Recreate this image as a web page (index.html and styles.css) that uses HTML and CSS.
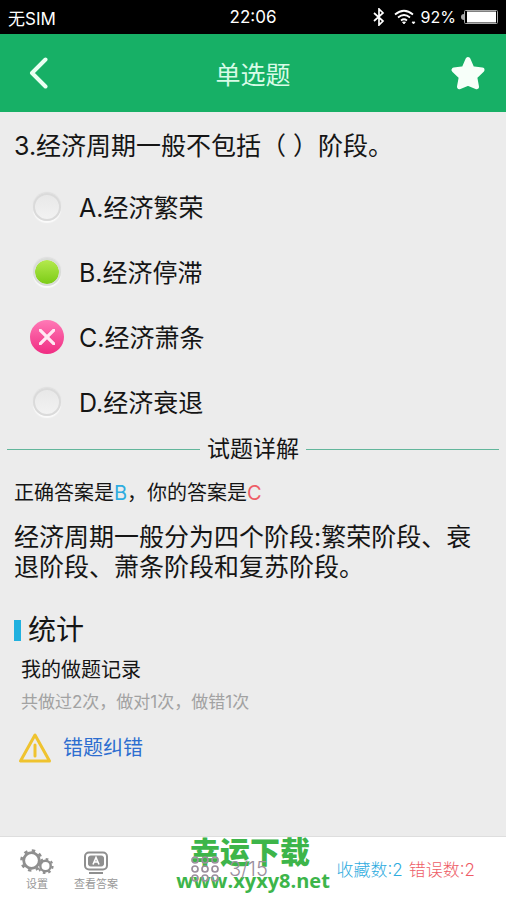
FILE: index.html
```html
<!DOCTYPE html>
<html lang="zh-CN">
<head>
<meta charset="utf-8">
<meta name="viewport" content="width=device-width, initial-scale=1">
<title>单选题</title>
<link rel="stylesheet" href="styles.css">
</head>
<body>
<div class="status">
  <span>无SIM</span>
  <span class="time">22:06</span>
  <span class="indicators">
    <svg class="bluetooth" width="12" height="18" viewBox="0 0 12 18" fill="none" stroke="#fff" stroke-width="1.7"><path d="M1 5l9 8-4 4V1l4 4-9 8"/></svg>
    <svg class="wifi" width="22" height="16" viewBox="0 0 22 16" fill="none" stroke="#fff" stroke-width="1.7"><path d="M1 5.500Q10 -2 19 5.500M4 8.500Q10 3.500 16 8.500M7 11.500Q10 9 13 11.500"/><path d="M8.500 13L10 15l1.500-2zM18 13h3l-1.500 2z" fill="#fff" stroke-width=".8"/></svg>
    <span>92%</span>
    <svg class="battery" width="37" height="14" viewBox="0 0 37 14"><path d="M3 4Q0 4 0 7t3 3z" fill="#aaa"/><rect x="3.500" y=".5" width="33" height="13" rx="1" fill="none" stroke="#aaa"/><rect x="6" y="1.500" width="29" height="11" fill="#fff"/></svg>
  </span>
</div>
<header class="header">
  <button class="icon-button" aria-label="返回"><svg width="20" height="32" viewBox="0 0 20 32" fill="none" stroke="#e9fff2" stroke-width="4" stroke-linecap="round" stroke-linejoin="round"><path d="M17.500 2.500L4 16l13.500 13.500"/></svg></button>
  <h1>单选题</h1>
  <button class="icon-button star" aria-label="收藏"><svg width="36" height="36" viewBox="0 0 36 36" fill="#f7fff9" stroke="#f7fff9" stroke-width="5" stroke-linejoin="round"><path d="M18 4.500l4 9.200 10 1.300-7.300 7 1.800 9.700L18 28.200l-8.500 3.500 1.800-9.700-7.300-7 10-1.300z"/></svg></button>
</header>
<main class="content">
  <form>
    <fieldset class="question">
      <legend>3.经济周期一般不包括（ ）阶段。</legend>
      <label class="option"><input type="radio" name="answer-a"><span>A.经济繁荣</span></label>
      <label class="option"><input type="radio" name="correct" class="correct" checked><span>B.经济停滞</span></label>
      <label class="option"><input type="radio" name="chosen" class="wrong" checked><span>C.经济萧条</span></label>
      <label class="option"><input type="radio" name="answer-d"><span>D.经济衰退</span></label>
    </fieldset>
  </form>
  <h2 class="divider">试题详解</h2>
  <p class="result">正确答案是<span class="blue">B</span>，你的答案是<span class="red">C</span></p>
  <p class="explanation">经济周期一般分为四个阶段:繁荣阶段、衰退阶段、萧条阶段和复苏阶段。</p>
  <section class="stats">
    <h2>统计</h2>
    <h3>我的做题记录</h3>
    <p>共做过2次，做对1次，做错1次</p>
    <a href="#report"><svg width="34" height="32" viewBox="0 0 34 32" fill="none" stroke="#efc32f" stroke-width="3" stroke-linejoin="round"><path d="M17 3L2.500 29h29z"/><path d="M17 13v11" stroke-linecap="round"/></svg>错题纠错</a>
  </section>
</main>
<footer class="footer">
  <button class="tool settings">
    <svg width="34" height="26" viewBox="0 0 34 26" fill="none" stroke="#8f8f8f"><circle cx="11.500" cy="11.500" r="7.800" stroke-width="2.800"/><circle cx="11.500" cy="11.500" r="10" stroke-width="2.600" stroke-dasharray="3.400 4.454"/><circle cx="25.500" cy="17" r="5.200" stroke-width="2.400"/><circle cx="25.500" cy="17" r="7" stroke-width="2.200" stroke-dasharray="2.600 2.898"/></svg>
    <span>设置</span>
  </button>
  <button class="tool answers">
    <svg width="24" height="24" viewBox="0 0 24 24" fill="none" stroke="#8f8f8f"><rect x="1" y="1.500" width="22" height="17" rx="4" stroke-width="2"/><rect x="4.500" y="5" width="15" height="10" rx="2" fill="#8f8f8f"/><path d="M9 13.500l3-7 3 7M10 11h4" stroke="#fff" stroke-width="1.600"/><path d="M5 22h14" stroke-width="2"/></svg>
    <span>查看答案</span>
  </button>
  <button class="pager">
    <svg width="28" height="28" viewBox="0 0 28 28" fill="none" stroke="#9b8f9d" stroke-width="1.700"><circle cx="4" cy="5" r="3"/><circle cx="14" cy="5" r="3"/><circle cx="24" cy="5" r="3"/><circle cx="4" cy="14" r="3"/><circle cx="14" cy="14" r="3"/><circle cx="24" cy="14" r="3"/><circle cx="4" cy="23" r="3"/><circle cx="14" cy="23" r="3"/><circle cx="24" cy="23" r="3"/></svg>
    <span>3/15</span>
  </button>
  <div class="counts"><span class="blue">收藏数:2</span><span class="red">错误数:2</span></div>
  <div class="watermark"><strong>幸运下载</strong><span>www.xyxy8.net</span></div>
</footer>
</body>
</html>
```
FILE: styles.css
```css
* {
  box-sizing: border-box;
}

body {
  margin: 0;
  min-height: 100vh;
  display: flex;
  flex-direction: column;
  background: #ececec;
  color: #151515;
  font-family: Inter, "Noto Sans CJK SC", sans-serif;
}

h1, h2, h3, p {
  margin: 0;
  font-weight: 400;
}

button {
  border: 0;
  padding: 0;
  background: none;
  font-family: inherit;
}

svg {
  display: block;
}

.blue {
  color: #2eace0;
}

.red {
  color: #ee5c66;
}

.status {
  display: grid;
  grid-template-columns: 1fr auto 1fr;
  align-items: center;
  height: 34px;
  padding: 0 8px;
  background: #000;
  color: #fff;
  font-size: 17px;
}

.indicators {
  display: flex;
  justify-content: flex-end;
  align-items: center;
  gap: 5px;
  font-size: 16px;
}

.bluetooth {
  margin-right: 4px;
}

.header {
  display: flex;
  align-items: center;
  justify-content: space-between;
  height: 78px;
  padding: 0 20px;
  background: #17b066;
}

.header h1 {
  color: #d8fbe7;
  font-size: 25px;
}

.icon-button {
  display: flex;
  align-items: center;
  width: 36px;
  height: 48px;
  padding-left: 8px;
}

.star {
  padding: 0;
}

.content {
  flex: 1;
}

.question {
  min-width: 0;
  margin: 0;
  padding: 0 14px;
  border: 0;
}

.question legend {
  padding: 16px 0 0;
  font-size: 25px;
  line-height: 36px;
}

.question legend + .option {
  margin-top: 10px;
}

.option {
  display: flex;
  align-items: center;
  gap: 18px;
  height: 65px;
  padding-left: 19px;
  font-size: 25px;
}

.option span {
  padding-bottom: 2px;
}

.option input {
  appearance: none;
  flex: none;
  width: 28px;
  height: 28px;
  margin: 0;
  border: 2px solid #dadada;
  border-radius: 50%;
  background: linear-gradient(#e8e8e8, #f2f2f2) padding-box;
  box-shadow: 0 -1px 1px #dedede, 0 2px 1px #fafafa;
}

.option .correct {
  border-color: #d9dcd8;
  background: linear-gradient(#b4e94e, #7ccc16) padding-box;
}

.option .wrong {
  width: 34px;
  height: 34px;
  margin: 0 -3px;
  border: 0;
  background:
    linear-gradient(45deg, transparent 43%, #ffe8f3 44% 56%, transparent 57%) center / 16px 16px no-repeat,
    linear-gradient(-45deg, transparent 43%, #ffe8f3 44% 56%, transparent 57%) center / 16px 16px no-repeat,
    linear-gradient(#ff79b6, #f02c82);
  box-shadow: none;
}

.divider {
  display: flex;
  align-items: center;
  gap: 7px;
  padding: 0 7px;
  font-size: 23px;
  line-height: 30px;
}

.divider::before,
.divider::after {
  content: "";
  flex: 1;
  height: 1px;
  background: #62b69b;
}

.result {
  padding: 14px 14px 0;
  font-size: 20px;
  line-height: 30px;
}

.explanation {
  padding: 14px 14px 0;
  font-size: 25px;
  line-height: 30px;
}

.stats {
  padding: 28px 14px 16px;
}

.stats h2 {
  display: flex;
  align-items: center;
  gap: 7px;
  font-size: 28px;
  line-height: 40px;
}

.stats h2::before {
  content: "";
  width: 7px;
  height: 21px;
  background: #21b1df;
}

.stats h3 {
  padding-left: 7px;
  font-size: 20px;
  line-height: 40px;
}

.stats p {
  padding-left: 7px;
  color: #a2a2a2;
  font-size: 17px;
  line-height: 24px;
}

.stats a {
  display: flex;
  align-items: center;
  gap: 11px;
  padding: 18px 0 0 4px;
  color: #2d6ed0;
  font-size: 20px;
  line-height: 32px;
  text-decoration: none;
}

.footer {
  position: relative;
  display: flex;
  align-items: center;
  height: 64px;
  padding: 0 31px 0 20px;
  border-top: 1px solid #dedede;
  background: #fff;
}

.tool {
  display: flex;
  flex-direction: column;
  align-items: center;
  justify-content: flex-end;
  gap: 2px;
  height: 44px;
  color: #999;
  font-size: 11px;
  line-height: 14px;
}

.answers {
  margin-left: 20px;
}

.pager {
  position: relative;
  z-index: 1;
  display: flex;
  align-items: center;
  gap: 10px;
  margin-left: 73px;
  color: #9b8f9d;
  font-size: 20px;
  font-weight: 300;
}

.counts {
  display: flex;
  gap: 6px;
  margin-left: auto;
  font-size: 17px;
  font-weight: 300;
  white-space: nowrap;
}

.watermark {
  position: absolute;
  top: 0;
  left: 50%;
  display: flex;
  flex-direction: column;
  align-items: center;
  width: 160px;
  margin-left: -80px;
  color: #3db54a;
  font-family: "Open Sans", "Noto Sans CJK SC", sans-serif;
  font-size: 20px;
  font-weight: 700;
  line-height: 28px;
  pointer-events: none;
}

.watermark strong {
  padding-right: 6px;
  font-size: 30px;
  line-height: 30px;
}
```
